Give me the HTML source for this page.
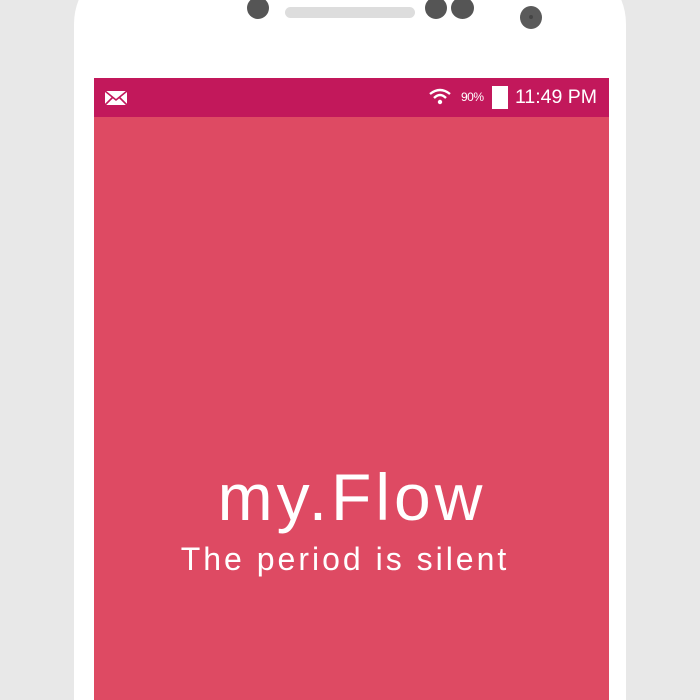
<!DOCTYPE html>
<html style="width:700px;height:700px;overflow:hidden"><head><meta charset="utf-8"><style>
*{margin:0;padding:0;box-sizing:border-box}
body{width:700px;height:700px;background:#e8e8e8;position:relative;overflow:hidden;font-family:"Liberation Sans",sans-serif}
.phone{position:absolute;left:74px;top:-40px;width:552px;height:740px;background:#fff;border-radius:64px 64px 0 0}
.dot{position:absolute;background:#555;border-radius:50%}
.screen{position:absolute;left:94px;top:78px;width:515px;height:622px;background:#de4a63}
.sb{position:absolute;left:0;top:0;width:515px;height:39px;background:#c2185b;color:#fff}
.t1{position:absolute;left:0;width:700px;text-align:center;color:#fff;font-weight:300;white-space:nowrap}
</style></head><body>
<div class="phone"></div>
<div class="dot" style="left:247px;top:-3px;width:22px;height:22px"></div>
<div style="position:absolute;left:285px;top:7px;width:130px;height:11px;background:#ddd;border-radius:6px"></div>
<div class="dot" style="left:425px;top:-3px;width:22px;height:22px"></div>
<div class="dot" style="left:451px;top:-3px;width:23px;height:22px"></div>
<div class="dot" style="left:520px;top:6px;width:22px;height:23px;background:#5a5a5a"></div>
<div class="dot" style="left:529px;top:15px;width:4px;height:4px;background:#444"></div>
<div class="screen">
 <div class="sb">
  <svg style="position:absolute;left:10px;top:12px" width="24" height="16" viewBox="0 0 24 16"><rect x="1" y="1" width="22" height="14" fill="#fff"/><path d="M1 1 L12 10 L23 1 M1 15 L9 7 M23 15 L15 7" stroke="#c2185b" stroke-width="1.6" fill="none"/></svg>
  <svg style="position:absolute;left:334px;top:9px" width="24" height="18" viewBox="0 0 24 18"><path d="M2 7 Q12 -1 22 7" stroke="#fff" stroke-width="2.4" fill="none"/><path d="M6 11 Q12 5 18 11" stroke="#fff" stroke-width="2.4" fill="none"/><circle cx="12" cy="15" r="2.2" fill="#fff"/></svg>
  <span style="position:absolute;left:367px;top:12px;font-size:12px;letter-spacing:-0.5px">90%</span>
  <div style="position:absolute;left:398px;top:8px;width:16px;height:23px;background:#fff"></div>
  <span style="position:absolute;left:421px;top:8px;font-size:19.5px">11:49 PM</span>
 </div>
</div>
<div class="t1" style="top:459px;font-size:66px;letter-spacing:4px;padding-left:4px">my.Flow</div>
<div class="t1" style="top:541px;font-size:32px;letter-spacing:3px;left:-5px">The period is silent</div>
</body></html>
